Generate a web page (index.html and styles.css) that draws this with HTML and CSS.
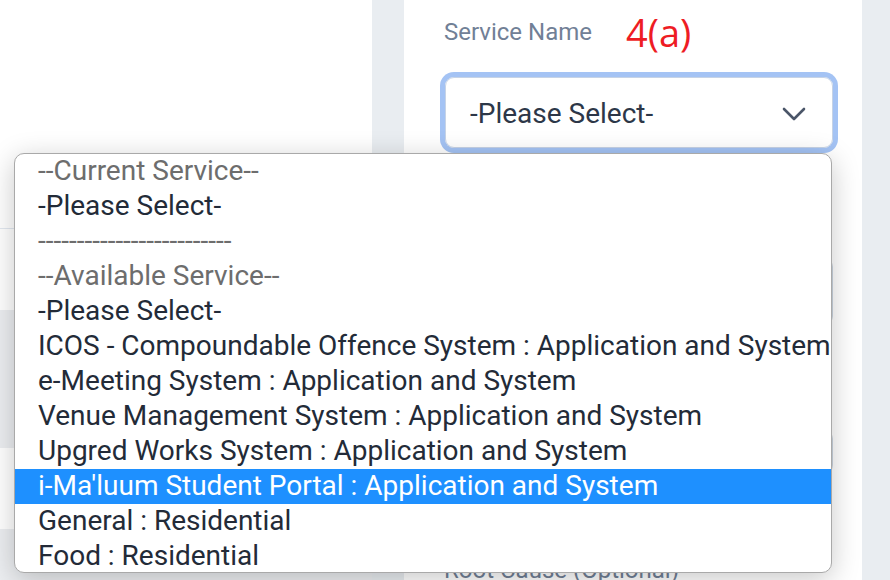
FILE: index.html
```html
<!DOCTYPE html>
<html lang="en">
<head>
    <title>Service Request</title>
    <link rel="stylesheet" href="styles.css">
</head>
<body>
    <div class="layout">
        <aside class="side-panel">
            <div class="side-top"></div>
            <div class="side-rule"></div>
            <div class="side-band"></div>
            <div class="side-band"></div>
        </aside>

        <div class="gutter"></div>

        <section class="card">
            <div class="label-row">
                <span class="label">Service Name</span>
                <span class="note">4(a)</span>
            </div>
            <div class="select">
                <span>-Please Select-</span>
                <svg class="chevron" width="24" height="16" viewBox="0 0 24 16">
                    <path d="M2 3 L12 13 L22 3" fill="none" stroke="#4a5568" stroke-width="2.6" stroke-linecap="round" stroke-linejoin="round"/>
                </svg>
            </div>

            <div class="field-input first"></div>
            <div class="field-input second"></div>
            <div class="label root">Root Cause (Optional)</div>
        </section>

        <div class="gutter"></div>
    </div>

    <ul class="dropdown">
        <li class="group">--Current Service--</li>
        <li>-Please Select-</li>
        <li class="group">-------------------------</li>
        <li class="group">--Available Service--</li>
        <li>-Please Select-</li>
        <li>ICOS - Compoundable Offence System : Application and System</li>
        <li>e-Meeting System : Application and System</li>
        <li>Venue Management System : Application and System</li>
        <li>Upgred Works System : Application and System</li>
        <li class="active">i-Ma'luum Student Portal : Application and System</li>
        <li>General : Residential</li>
        <li>Food : Residential</li>
    </ul>
</body>
</html>
```

FILE: styles.css
```css
body {
    font-family: Roboto, "Liberation Sans", sans-serif;
    margin: 0;
    padding: 0;
    width: 890px;
    height: 580px;
    overflow: hidden;
    position: relative;
    background-color: #ffffff;
}
.layout {
    display: flex;
    height: 580px;
    overflow: hidden;
}
.side-panel {
    width: 372px;
    background-color: #ffffff;
}
.side-top {
    height: 228px;
}
.side-rule {
    height: 1px;
    background-color: #e2e8f0;
}
.side-band {
    height: 138px;
    margin-top: 81px;
    background-color: #eceef1;
}
.gutter {
    width: 32px;
    background-color: #e9edf1;
}
.gutter:last-child {
    flex: 1;
}
.card {
    width: 458px;
    padding-left: 40px;
    box-sizing: border-box;
    background-color: #ffffff;
}
.label-row {
    display: flex;
    align-items: center;
    gap: 34px;
    height: 40px;
    margin-top: 12px;
}
.label {
    font-size: 24px;
    color: #718096;
}
.note {
    font-family: "Open Sans", "Noto Sans", sans-serif;
    font-size: 38px;
    color: #ee1c24;
}
.select {
    display: flex;
    align-items: center;
    justify-content: space-between;
    width: 388px;
    height: 71px;
    margin-top: 25px;
    margin-left: 1px;
    padding: 2px 26px 0 24px;
    box-sizing: border-box;
    border: 1px solid #c6d3e6;
    border-radius: 9px;
    box-shadow: 0 0 0 5px #a4c3f4;
    font-size: 28px;
    color: #2d3748;
}
.chevron {
    display: block;
}
.field-input {
    width: 388px;
    height: 67px;
    margin-left: 1px;
    box-sizing: border-box;
    border: 1px solid #cbd5e0;
    border-radius: 9px;
}
.field-input.first {
    margin-top: 110px;
}
.field-input.second {
    margin-top: 105px;
    height: 44px;
}
.label.root {
    margin-top: 82px;
    line-height: 28px;
}
.dropdown {
    position: absolute;
    left: 14px;
    top: 153px;
    width: 818px;
    height: 420px;
    margin: 0;
    padding: 0;
    list-style: none;
    box-sizing: border-box;
    background-color: #ffffff;
    border: 1px solid #a9a9a9;
    border-radius: 10px;
    box-shadow: 0 6px 28px rgba(0, 0, 0, 0.22);
    overflow: hidden;
}
.dropdown li {
    height: 35px;
    line-height: 33px;
    padding-left: 23px;
    font-size: 28px;
    color: #232b38;
    white-space: nowrap;
}
.dropdown li.group {
    color: #6d6d6d;
}
.dropdown li.active {
    background-color: #1e90ff;
    color: #ffffff;
}
```
